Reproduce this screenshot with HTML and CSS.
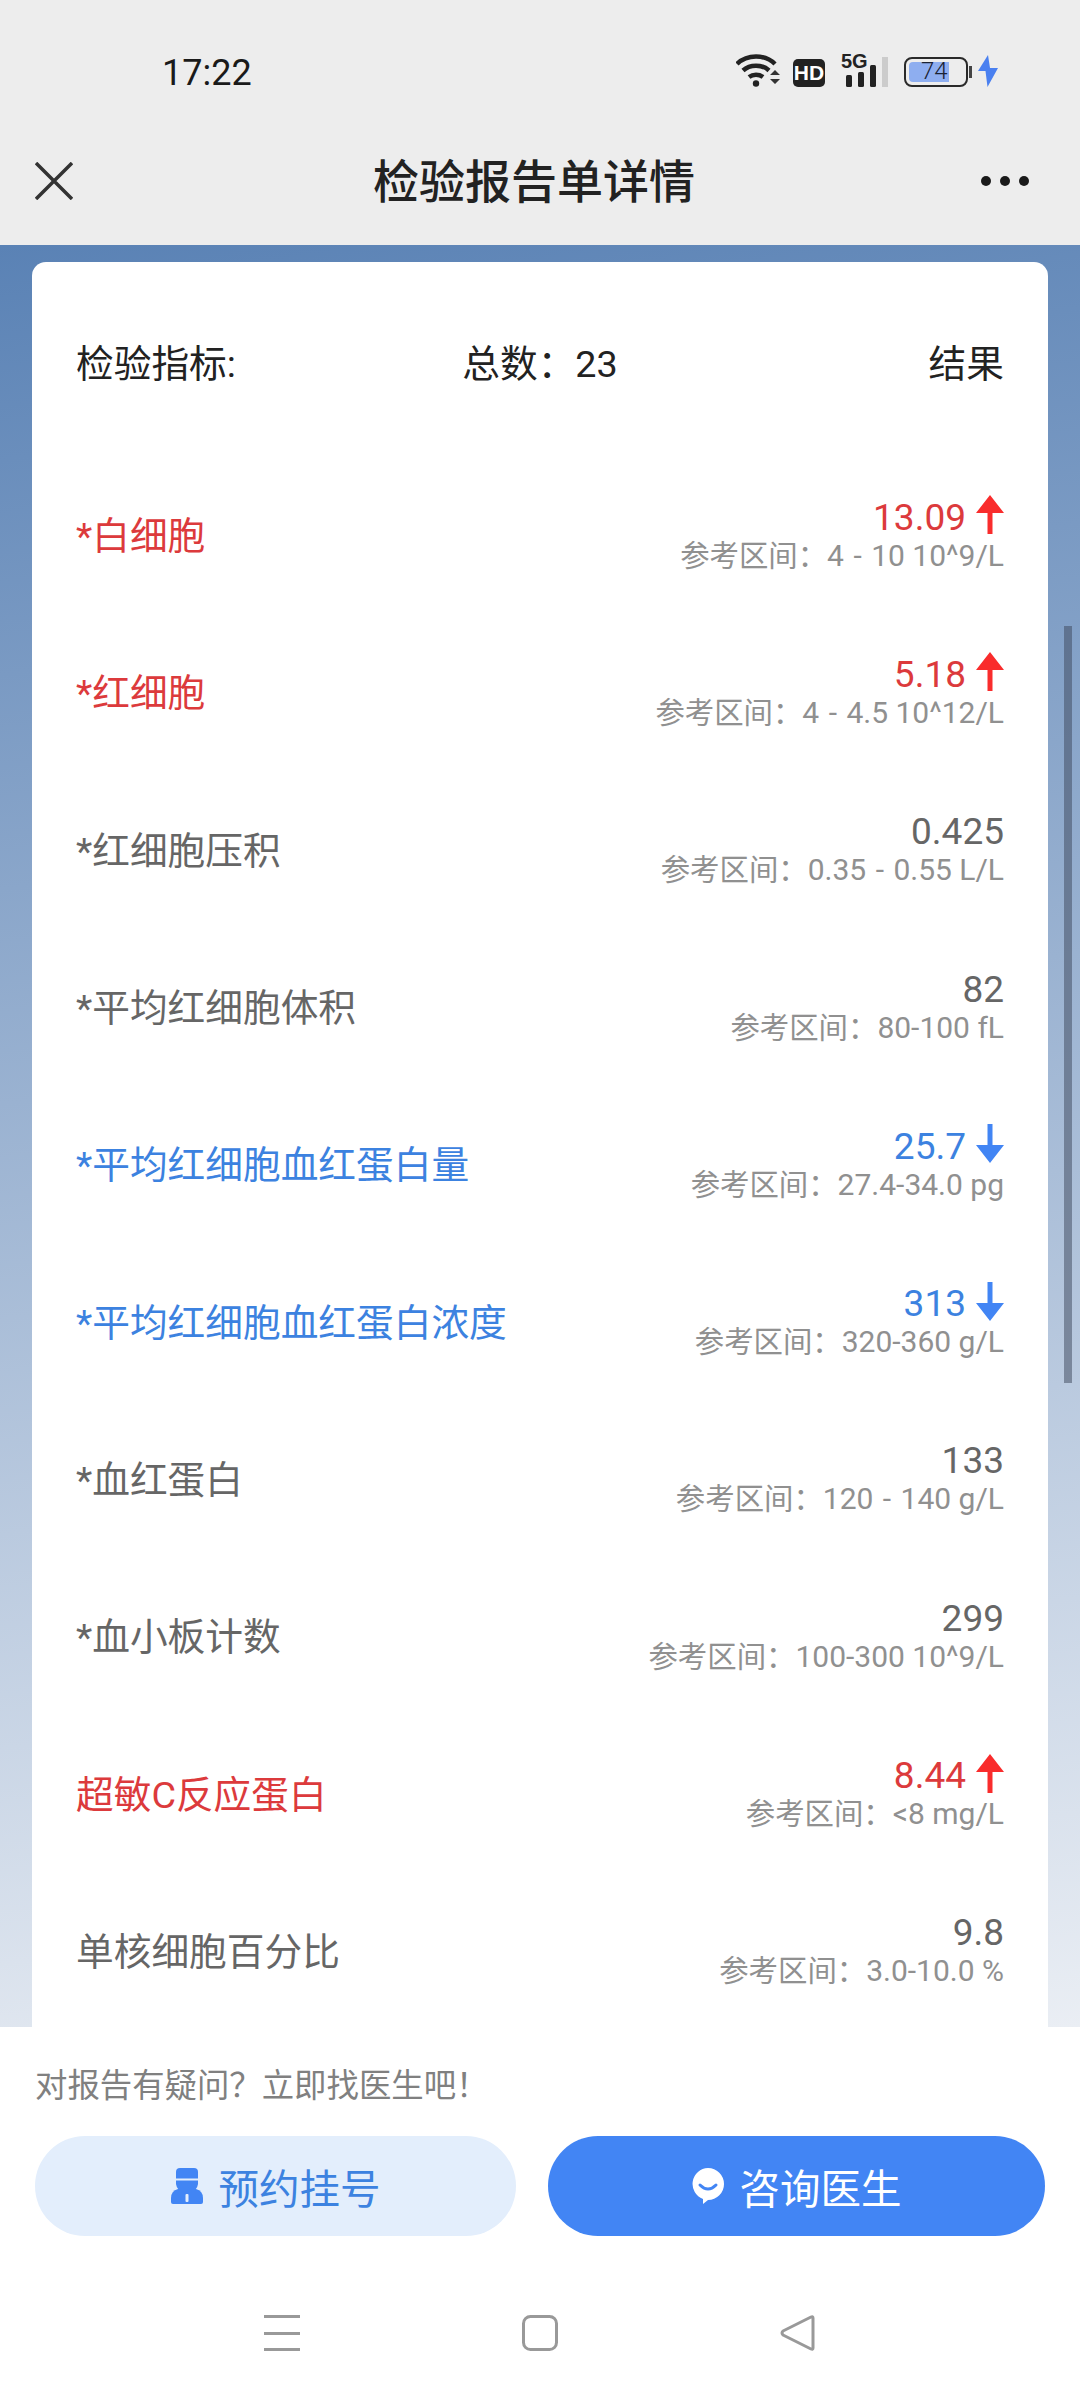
FILE: index.html
```html
<!DOCTYPE html>
<html lang="zh-CN">
<head>
    <meta charset="UTF-8">
    <meta name="viewport" content="width=device-width, initial-scale=1.0">
    <title>检验报告单详情</title>
    <link rel="stylesheet" href="styles.css">
</head>
<body>
    <div class="top">
        <div class="status">
            <span class="time">17:22</span>
            <div class="status-icons">
                <svg class="wifi" width="44" height="33" viewBox="0 0 44 33">
                    <g fill="none" stroke="#222" stroke-width="4.500">
                        <path d="M1 10C11 0 29 0 39 10"/>
                        <path d="M7 16.500C14 10 26 10 33 16.500"/>
                        <path d="M13 23C17 20 23 20 27 23"/>
                    </g>
                    <circle cx="20" cy="29.500" r="3.200" fill="#222"/>
                    <path d="M34 21l5-5 5 5zM34 25h10l-5 5z" fill="#333"/>
                </svg>
                <span class="hd">HD</span>
                <div class="signal">
                    <span class="fiveg">5G</span>
                    <svg width="44" height="30" viewBox="0 0 44 30">
                        <rect x="1" y="18" width="6" height="12" rx="1.500" fill="#222"/>
                        <rect x="13" y="15" width="6" height="15" rx="1.500" fill="#222"/>
                        <rect x="25" y="8" width="6" height="22" rx="1.500" fill="#222"/>
                        <rect x="37" y="0" width="6" height="30" fill="#ccc"/>
                    </svg>
                </div>
                <div class="battery">
                    <div class="battery-body">
                        <div class="battery-fill"></div>
                        <span class="battery-num">74</span>
                    </div>
                    <div class="battery-cap"></div>
                </div>
                <svg class="bolt" width="20" height="32" viewBox="0 0 20 32">
                    <path d="M10 0L0 16h7.500l2 16L20 13h-8z" fill="#4a80f0"/>
                </svg>
            </div>
        </div>
        <div class="nav">
            <svg class="close" width="38" height="38" viewBox="0 0 38 38">
                <path d="M1 1L37 37M37 1L1 37" stroke="#333" stroke-width="3.500" fill="none"/>
            </svg>
            <h1>检验报告单详情</h1>
            <div class="more"><i></i><i></i><i></i></div>
        </div>
    </div>

    <div class="content">
        <div class="card">
            <div class="card-head">
                <span class="head-name">检验指标:</span>
                <span class="head-total">总数：23</span>
                <span class="head-result">结果</span>
            </div>

            <div class="row high">
                <div class="name">*白细胞</div>
                <div class="result">
                    <div class="value">13.09<svg class="arrow" width="28" height="39" viewBox="0 0 28 39"><path d="M14 0L28 18H16.500V39H11.500V18H0z"/></svg></div>
                    <div class="range"><span class="range-label">参考区间：</span>4<span class="dash"> - </span>10 10^9/L</div>
                </div>
            </div>
            <div class="row high">
                <div class="name">*红细胞</div>
                <div class="result">
                    <div class="value">5.18<svg class="arrow" width="28" height="39" viewBox="0 0 28 39"><path d="M14 0L28 18H16.500V39H11.500V18H0z"/></svg></div>
                    <div class="range"><span class="range-label">参考区间：</span>4<span class="dash"> - </span>4.5 10^12/L</div>
                </div>
            </div>
            <div class="row">
                <div class="name">*红细胞压积</div>
                <div class="result">
                    <div class="value">0.425</div>
                    <div class="range"><span class="range-label">参考区间：</span>0.35<span class="dash"> - </span>0.55 L/L</div>
                </div>
            </div>
            <div class="row">
                <div class="name">*平均红细胞体积</div>
                <div class="result">
                    <div class="value">82</div>
                    <div class="range"><span class="range-label">参考区间：</span>80-100 fL</div>
                </div>
            </div>
            <div class="row low">
                <div class="name">*平均红细胞血红蛋白量</div>
                <div class="result">
                    <div class="value">25.7<svg class="arrow" width="28" height="39" viewBox="0 0 28 39"><path d="M14 39L28 21H16.500V0H11.500V21H0z"/></svg></div>
                    <div class="range"><span class="range-label">参考区间：</span>27.4-34.0 pg</div>
                </div>
            </div>
            <div class="row low">
                <div class="name">*平均红细胞血红蛋白浓度</div>
                <div class="result">
                    <div class="value">313<svg class="arrow" width="28" height="39" viewBox="0 0 28 39"><path d="M14 39L28 21H16.500V0H11.500V21H0z"/></svg></div>
                    <div class="range"><span class="range-label">参考区间：</span>320-360 g/L</div>
                </div>
            </div>
            <div class="row">
                <div class="name">*血红蛋白</div>
                <div class="result">
                    <div class="value">133</div>
                    <div class="range"><span class="range-label">参考区间：</span>120<span class="dash"> - </span>140 g/L</div>
                </div>
            </div>
            <div class="row">
                <div class="name">*血小板计数</div>
                <div class="result">
                    <div class="value">299</div>
                    <div class="range"><span class="range-label">参考区间：</span>100-300 10^9/L</div>
                </div>
            </div>
            <div class="row high">
                <div class="name">超敏C反应蛋白</div>
                <div class="result">
                    <div class="value">8.44<svg class="arrow" width="28" height="39" viewBox="0 0 28 39"><path d="M14 0L28 18H16.500V39H11.500V18H0z"/></svg></div>
                    <div class="range"><span class="range-label">参考区间：</span>&lt;8 mg/L</div>
                </div>
            </div>
            <div class="row">
                <div class="name">单核细胞百分比</div>
                <div class="result">
                    <div class="value">9.8</div>
                    <div class="range"><span class="range-label">参考区间：</span>3.0-10.0 %</div>
                </div>
            </div>
        </div>
        <div class="scrollbar"></div>
    </div>

    <div class="footer">
        <div class="tip">对报告有疑问？立即找医生吧！</div>
        <div class="buttons">
            <div class="btn btn-light">
                <svg width="32" height="36" viewBox="0 0 32 36">
                    <path d="M9 0H23Q27 0 27 4V10.500H5V4Q5 0 9 0z" fill="#4285f4"/>
                    <path d="M5 12.500H27V16Q26 22 21 23H11Q6 22 5 16z" fill="#4285f4"/>
                    <path d="M7 21H25Q32 23 32 30V34Q32 36 30 36H2Q0 36 0 34V30Q0 23 7 21z" fill="#4285f4"/>
                    <rect x="14.500" y="26" width="3" height="8" rx="1" fill="#e3eefc"/>
                </svg>
                <span>预约挂号</span>
            </div>
            <div class="btn btn-blue">
                <svg width="32" height="36" viewBox="0 0 32 36">
                    <path d="M16 0A16 16 0 0 1 16 32L11 36V31A16 16 0 0 1 16 0z" fill="#fff"/>
                    <path d="M8 17Q16 25 24 17" stroke="#4285f4" stroke-width="3" stroke-linecap="round" fill="none"/>
                </svg>
                <span>咨询医生</span>
            </div>
        </div>
        <div class="sysnav">
            <svg width="36" height="36" viewBox="0 0 36 36">
                <path d="M0 1.500H36M0 18.500H36M0 34.500H36" stroke="#999" stroke-width="3"/>
            </svg>
            <svg width="36" height="36" viewBox="0 0 36 36">
                <rect x="1.500" y="1.500" width="33" height="33" rx="7" fill="none" stroke="#999" stroke-width="3"/>
            </svg>
            <svg width="36" height="36" viewBox="0 0 36 36">
                <path d="M33 3Q33 1 31 2L3 16Q1 18 3 20L31 34Q33 35 33 33z" fill="none" stroke="#999" stroke-width="3" stroke-linejoin="round"/>
            </svg>
        </div>
    </div>
</body>
</html>
```

FILE: styles.css
```css
* {
    box-sizing: border-box;
}

body {
    font-family: Roboto, "Noto Sans CJK SC", sans-serif;
    width: 1080px;
    height: 2400px;
    margin: 0;
    display: flex;
    flex-direction: column;
    overflow: hidden;
    background: #fff;
}

.top {
    height: 245px;
    background: #ededed;
    flex-shrink: 0;
}

.status {
    height: 116px;
    padding: 47px 82px 0 162px;
    display: flex;
    justify-content: space-between;
    align-items: flex-start;
}

.time {
    font-size: 36px;
    line-height: 44px;
    margin-top: 4px;
    color: #1a1a1a;
}

.status-icons {
    display: flex;
    align-items: flex-end;
    height: 40px;
}

.wifi {
    margin-right: 13px;
}

.hd {
    width: 32px;
    height: 28px;
    margin-right: 20px;
    border-radius: 5px;
    background: #222;
    color: #fff;
    font: bold 21px/28px "Liberation Sans Narrow", "Liberation Sans", sans-serif;
    text-align: center;
}

.signal {
    position: relative;
    width: 44px;
    height: 30px;
    margin-right: 15px;
}

.fiveg {
    position: absolute;
    left: -4px;
    top: -5px;
    font: bold 20px/18px "Liberation Sans Narrow", "Liberation Sans", sans-serif;
    color: #222;
}

.battery {
    display: flex;
    align-items: center;
    margin-right: 6px;
}

.battery-body {
    position: relative;
    width: 64px;
    height: 30px;
    border: 2.500px solid #2a2a2a;
    border-radius: 8px;
    padding: 3px;
}

.battery-fill {
    width: 40px;
    height: 100%;
    background: #8eaef0;
    border-radius: 4px 0 0 4px;
}

.battery-num {
    position: absolute;
    left: 15px;
    top: 0;
    font-size: 24px;
    font-weight: 300;
    line-height: 25px;
    color: #1a2233;
}

.battery-cap {
    width: 3px;
    height: 12px;
    margin-left: 1px;
    background: #444;
}

.nav {
    height: 129px;
    padding: 0 51px 0 35px;
    display: flex;
    align-items: center;
    justify-content: space-between;
}

.nav h1 {
    margin: 0 0 5px 14px;
    font-size: 46px;
    font-weight: 500;
    color: #222;
}

.more {
    display: flex;
    gap: 9px;
}

.more i {
    width: 10px;
    height: 10px;
    border-radius: 50%;
    background: #1a1a1a;
}

.content {
    position: relative;
    flex: 1;
    overflow: hidden;
    padding: 17px 32px 0;
    background: linear-gradient(172deg, #5a82b5, #eaeef4);
}

.card {
    height: 1900px;
    background: #fff;
    border-radius: 14px;
    padding: 0 44px;
}

.card-head {
    height: 195px;
    padding-bottom: 68px;
    display: grid;
    grid-template-columns: 1fr 1fr 1fr;
    align-items: end;
    font-size: 37.700px;
    line-height: 50px;
    color: #222;
}

.head-total {
    text-align: center;
}

.head-result {
    text-align: right;
}

.row {
    height: 157.300px;
    display: flex;
    align-items: center;
    justify-content: space-between;
    color: #666;
}

.name {
    font-size: 37.700px;
    margin-bottom: 6px;
}

.result {
    text-align: right;
}

.value {
    display: flex;
    justify-content: flex-end;
    align-items: center;
    gap: 10px;
    font-size: 37px;
    line-height: 40px;
}

.arrow {
    margin-top: -6px;
}

.range {
    font-size: 30px;
    line-height: 36px;
    color: #909090;
}

.range-label {
    font-size: 29.400px;
}

.dash {
    margin: 0 2px;
}

.high .name,
.high .value {
    color: #dc3a3c;
}

.high .arrow {
    fill: #f92c2c;
}

.low .name,
.low .value {
    color: #3c82e0;
}

.low .arrow {
    fill: #4285f4;
}

.scrollbar {
    position: absolute;
    left: 1064px;
    top: 381px;
    width: 8px;
    height: 757px;
    background: rgba(60, 70, 90, 0.5);
}

.footer {
    height: 373px;
    flex-shrink: 0;
    background: #fff;
    padding: 36px 35px 0;
}

.tip {
    font-size: 32.400px;
    line-height: 46px;
    color: #808080;
}

.buttons {
    display: flex;
    justify-content: space-between;
    margin-top: 27px;
}

.btn {
    height: 100px;
    border-radius: 50px;
    display: flex;
    align-items: center;
    justify-content: center;
    gap: 16px;
    font-size: 40.500px;
}

.btn-light {
    width: 481px;
    background: #e3eefc;
    color: #3c82e0;
}

.btn-blue {
    width: 497px;
    background: #4285f4;
    color: #fff;
}

.sysnav {
    display: flex;
    justify-content: space-between;
    width: 552px;
    margin: 79px 0 0 229px;
}
```
